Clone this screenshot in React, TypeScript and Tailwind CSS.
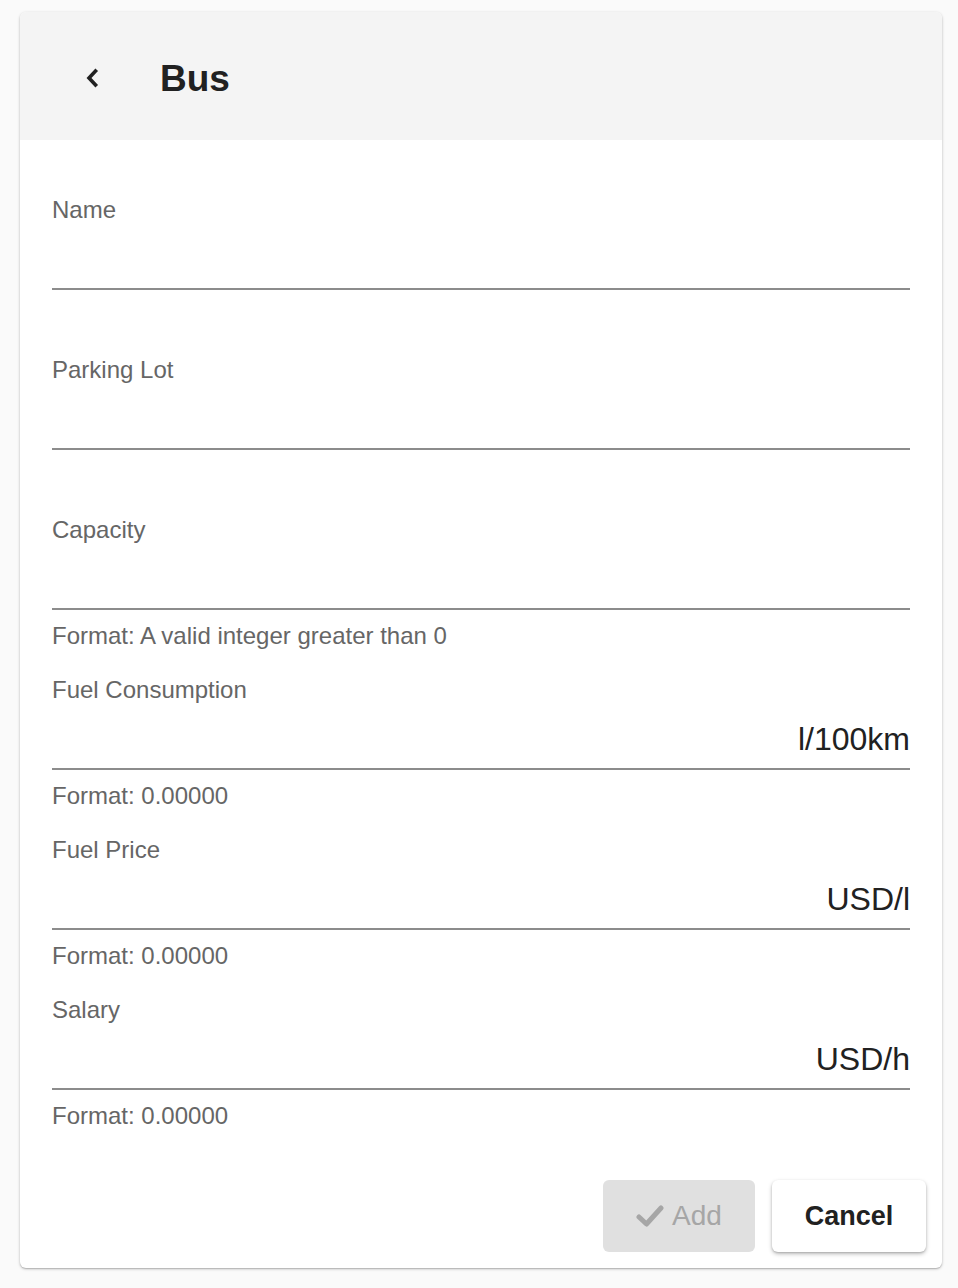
import React from "react";

type Field = { label: string; unit?: string; helper?: string };

const fields: Field[] = [
  { label: "Name" },
  { label: "Parking Lot" },
  { label: "Capacity", helper: "Format: A valid integer greater than 0" },
  { label: "Fuel Consumption", unit: "l/100km", helper: "Format: 0.00000" },
  { label: "Fuel Price", unit: "USD/l", helper: "Format: 0.00000" },
  { label: "Salary", unit: "USD/h", helper: "Format: 0.00000" },
];

function FieldBlock({ f }: { f: Field }) {
  return (
    <div className="h-[160px] flex flex-col">
      <div className="h-[30px] leading-[30px] text-[24px] text-[#666666]">{f.label}</div>
      <div className="h-[65px] flex items-end justify-end border-b-2 border-[#8c8c8c] pb-[11px]">
        {f.unit && (
          <span className="text-[32px] leading-[36px] text-[#212121]">{f.unit}</span>
        )}
      </div>
      {f.helper && (
        <div className="mt-[11px] h-[30px] leading-[30px] text-[24px] text-[#666666]">{f.helper}</div>
      )}
    </div>
  );
}

export default function App() {
  return (
    <div
      className="min-h-[1288px] bg-[#fafafa] pt-[12px] px-[20px] pb-[20px]"
      style={{ fontFamily: '"Liberation Sans", Arial, sans-serif' }}
    >
      <div className="w-[922px] bg-white rounded-[6px] shadow-[0_1px_3px_rgba(0,0,0,0.25),0_1px_1px_rgba(0,0,0,0.12)] overflow-hidden">
        <div className="h-[128px] bg-[#f4f4f4] flex items-center pl-[62px] pt-[4px]">
          <button className="w-[20px] h-[24px] flex items-center justify-center">
            <svg width="14" height="20" viewBox="0 0 14 20" fill="none">
              <path d="M10.5 3 L4 10 L10.5 17" stroke="#212121" strokeWidth="3.6" strokeLinecap="square" strokeLinejoin="miter" />
            </svg>
          </button>
          <h1 className="ml-[58px] text-[37px] font-bold text-[#212121] leading-none">Bus</h1>
        </div>
        <div className="px-[32px] pt-[55px]">
          {fields.map((f) => (
            <FieldBlock key={f.label} f={f} />
          ))}
        </div>
        <div className="flex justify-end gap-[17px] pr-[16px] pt-[25px] pb-[16px]">
          <button className="w-[152px] h-[72px] rounded-[6px] bg-[#e0e0e0] flex items-center justify-center gap-[8px] text-[28px] text-[#a6a6a6]">
            <svg width="28" height="24" viewBox="0 0 28 24" fill="none">
              <path d="M3 13 L10.5 20 L25 4" stroke="#a6a6a6" strokeWidth="5" strokeLinecap="round" strokeLinejoin="round" />
            </svg>
            <span>Add</span>
          </button>
          <button className="w-[154px] h-[72px] rounded-[6px] bg-white shadow-[0_2px_4px_rgba(0,0,0,0.25),0_1px_2px_rgba(0,0,0,0.15)] text-[27px] font-bold text-[#212121]">
            Cancel
          </button>
        </div>
      </div>
    </div>
  );
}
